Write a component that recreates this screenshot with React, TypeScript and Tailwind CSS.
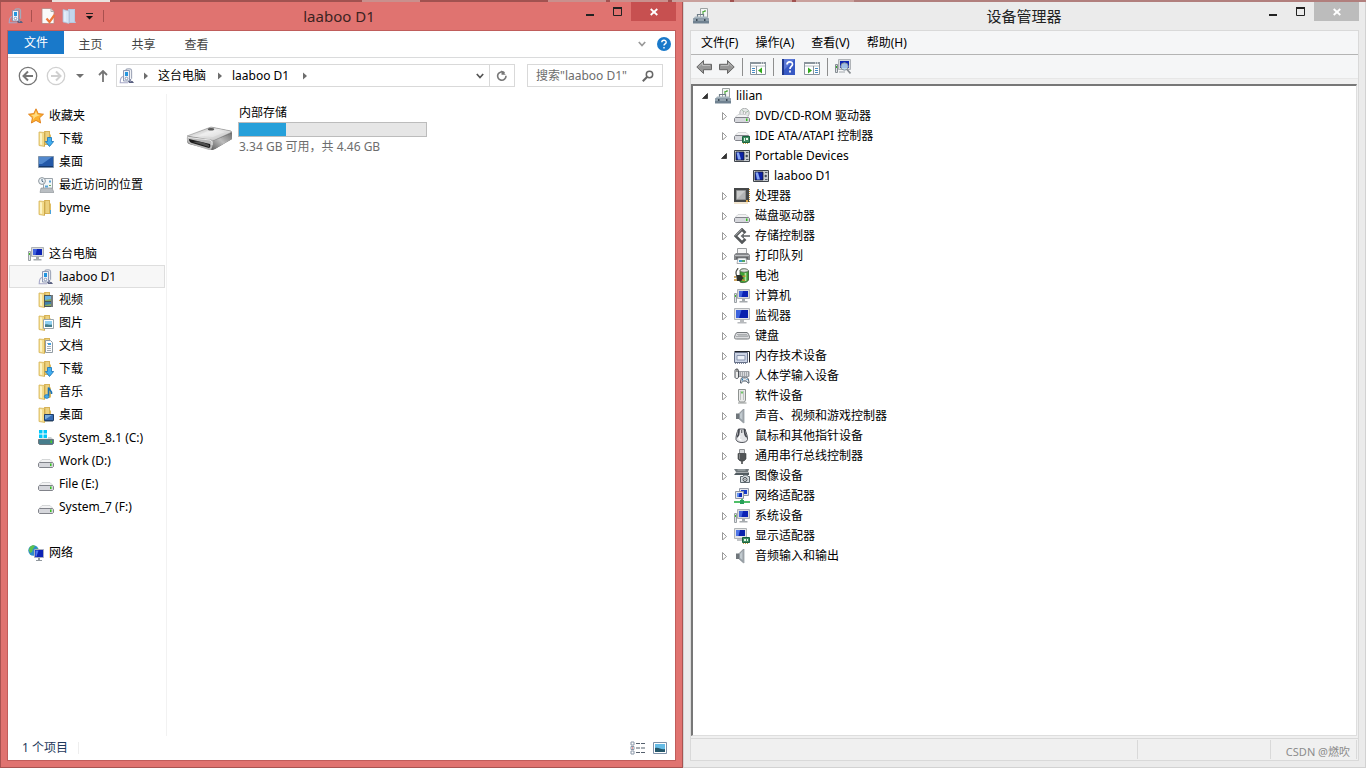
import React from "react";

type IconProps = { children: React.ReactNode; className?: string; box?: string };

const Icon = ({ children, className = "size-4", box = "0 0 16 16" }: IconProps) => (
  <svg viewBox={box} className={`block shrink-0 ${className}`} fill="none" aria-hidden="true">
    {children}
  </svg>
);

const FolderShape = () => (
  <>
    <path d="M6 0h6v3l1 1v9l-1 1H6z" fill="#dfbd62" />
    <path d="M7 .5h4.500v13H7z" fill="#ecd17f" stroke="#cfa94e" strokeWidth=".7" />
    <path d="M1 1 7 1.500v14l-6-1z" fill="#f3dc8c" />
    <path d="M2 2 4 2.500v11.500l-2-.5z" fill="#fdf3c4" />
    <path d="M6.500 1.500V15" stroke="#cda849" />
    <path d="M1 1 7 1.500M1 14.500l6 1M1 1v13.500" stroke="#d6b459" strokeWidth=".8" />
  </>
);

const FolderIcon = () => (
  <Icon>
    <FolderShape />
    <path d="M12.500 10v4" stroke="#4ba3dc" />
  </Icon>
);

const DownloadsIcon = () => (
  <Icon>
    <FolderShape />
    <path d="M9.500 6.500h4v4h2.200L11.500 15.500 7.300 10.500h2.200z" fill="#42aef0" stroke="#1672b5" strokeWidth=".8" />
  </Icon>
);

const VideosIcon = () => (
  <Icon>
    <FolderShape />
    <path d="M6 3h9v12H6z" fill="#4c5559" />
    <path d="M7 4h6v5H7z" fill="#67b3e3" />
    <path d="M7 10h6v4H7z" fill="#3f81aa" />
    <path d="M7 8l6-1v2H7zM7 13l6-1v2H7z" fill="#87a95d" />
    <path d="M14 3.500v11" stroke="#eee" strokeDasharray="1 1" />
  </Icon>
);

const PicturesIcon = () => (
  <Icon>
    <FolderShape />
    <path d="M5.500 4.500h10v9h-10z" fill="#fff" stroke="#9aa5ab" />
    <path d="M7 6h7v6H7z" fill="#8fd0f1" />
    <path d="M7 9.500c2-1 4 1 7 0V12H7z" fill="#457e8b" />
  </Icon>
);

const DocumentsIcon = () => (
  <Icon>
    <FolderShape />
    <path d="M7.500 2.500h5l2 2v10h-7z" fill="#fcfdfe" stroke="#929ca3" />
    <path d="M9 8.500h4M9 10.500h4M9 12.500h4M9 5.500h1" stroke="#a5adb5" />
    <path d="M10 5h3v2h-3z" fill="#47a2df" />
  </Icon>
);

const MusicIcon = () => (
  <Icon>
    <FolderShape />
    <path d="M10.500 12V3.500c.5 2.500 3.500 2.500 3 6.500" stroke="#1a72b6" strokeWidth="1.600" />
    <ellipse cx="8.700" cy="12.500" rx="2.300" ry="1.900" fill="#43a9e5" stroke="#1a72b6" strokeWidth=".7" />
  </Icon>
);

const FolderDesktopIcon = () => (
  <Icon>
    <FolderShape />
    <path d="M6.500 7.500h9v6h-9z" fill="#356bb4" stroke="#213f68" />
    <path d="M7 8h7l-6 4H7z" fill="#78acdd" />
    <path d="M7 14.500h8" stroke="#9aa6af" />
  </Icon>
);

const DesktopIcon = () => (
  <Icon>
    <path d="M.5 2.500h15v11H.500z" fill="#2459a8" stroke="#7d93ab" />
    <path d="M1 3h13L4 10H1z" fill="#5288cd" />
    <path d="M1 12.500h14" stroke="#16376a" />
  </Icon>
);

const StarIcon = () => (
  <Icon>
    <path
      d="M8 .8 10.200 5.600l5.300.6-3.900 3.600 1 5.200L8 12.400 3.400 15l1-5.200L.5 6.200l5.300-.6z"
      fill="#fbb12f"
      stroke="#df7d17"
      strokeWidth=".9"
    />
    <path d="M8 3 9.300 6.500l3 .5-5 2-2.500 3 .7-3.200L3 7l3.500-.5z" fill="#ffdc83" />
  </Icon>
);

const RecentIcon = () => (
  <Icon>
    <path d="M5.500 1.500h9v10h-9z" fill="#f3f6f8" stroke="#9ba3a9" />
    <path d="M3 11h11l2 4.500H2z" fill="#b9bec2" stroke="#868d92" strokeWidth=".6" />
    <path d="M7 9.500h3M11 4.500h2" stroke="#58a1d4" strokeWidth="2" />
    <path d="M11 8.500h2" stroke="#66ad61" />
    <circle cx="4" cy="4" r="3.400" fill="#eef3f7" stroke="#8d969d" />
    <path d="M4 2v2.200l1.500.8" stroke="#4f6a80" />
  </Icon>
);

const PortableIcon = () => (
  <Icon>
    <path d="M7 2.500C7 1 8 .8 9 .8h2c1.500 0 1.500.8 1.500 2v8" stroke="#a3aabb" strokeWidth="1.300" />
    <path d="M4.500 2.500h6v10.500h-6z" fill="#eef1f8" stroke="#8590ad" strokeWidth=".9" />
    <path d="M6 4h3v4H6z" fill="#2496df" />
    <circle cx="7.500" cy="10.500" r="1.300" fill="#fff" stroke="#7485a5" strokeWidth=".8" />
    <path d="M4 8.500C2 9 1.200 10.500 1.200 14.800H9" stroke="#a6a8c8" strokeWidth="1.100" />
    <path d="M9 13h4.500l1.500 2h-5z" fill="#596080" />
    <path d="M11.500 11v3" stroke="#888da9" strokeWidth="1.300" />
  </Icon>
);

const ComputerIcon = () => (
  <Icon>
    <path d="M.5 5.500h2v9h-2z" fill="#e2e5e8" stroke="#9aa0a5" />
    <path d="M1.500 7v2" stroke="#42bb28" />
    <path d="M3.500 1.500h12v9h-12z" fill="#d9dbdd" stroke="#aeb2b5" />
    <path d="M5 3h9v6H5z" fill="#0c23b5" />
    <path d="M5 3h4L7.500 9H5z" fill="#3f62dd" />
    <path d="M8 11h3v2H8zM5.500 13h8v1.500h-8z" fill="#a5aaae" />
  </Icon>
);

const MonitorIcon = () => (
  <Icon>
    <path d="M.5.5h15v11H.500z" fill="#e5e6e8" stroke="#b3b6b9" />
    <path d="M2 2h12v8H2z" fill="#0b22ae" />
    <path d="M2 2h5.500L5 10H2z" fill="#3c63dd" />
    <path d="M6 12h4v2H6zM3.500 14h9v1.500h-9z" fill="#b7babd" />
  </Icon>
);

const NetworkPlaceIcon = () => (
  <Icon>
    <circle cx="5.500" cy="5.500" r="5.200" fill="#2c8ccb" />
    <path d="M2 2c2-2 4-2 5-1L5 4 4 7 2 8 .8 5zM6 5l4-2 .5 4L7 10z" fill="#5dc24b" />
    <path d="M6.500 4.500h9v8h-9z" fill="#0c23b5" stroke="#a9aec0" />
    <path d="M7.500 5.500h3l-2 6h-1z" fill="#4d77ef" />
    <path d="M10 13h2v2h-2zM8 15h6v1H8z" fill="#92999f" />
  </Icon>
);

const DriveShape = () => (
  <>
    <path d="M4 6.500h8l3 3H1z" fill="#f3f3f4" stroke="#c6c8ca" strokeWidth=".7" />
    <path d="M1.500 9.500h13l1 1v3l-1 1h-13l-1-1v-3z" fill="#d6d7dc" stroke="#81838a" />
    <path d="M12 10.500h1.500v2.500H12z" fill="#35c321" />
  </>
);

const DriveIcon = () => (
  <Icon>
    <DriveShape />
  </Icon>
);

const SystemDriveIcon = () => (
  <Icon>
    <path d="M1 0h3.500v3.500H1zM5.500 0H9v3.500H5.500zM1 4.500h3.500V8H1zM5.500 4.500H9V8H5.500z" fill="#00c8fa" />
    <path d="M10 7h3l2.500 2.500H.5L2 8.500h8z" fill="#c9cfd1" />
    <path d="M.5 9.500h15v4l-1 1h-13l-1-1z" fill="#477d8c" stroke="#6c777d" />
    <path d="M12.500 10.500H14V13h-1.500z" fill="#48d229" />
  </Icon>
);

const OpticalIcon = () => (
  <Icon>
    <circle cx="10.500" cy="5" r="4.700" fill="#e5e7e7" stroke="#9fa3a5" strokeWidth=".8" />
    <path d="M10.500 5 8 1.500M10.500 5l4-2M10.500 5v4" stroke="#a3bfa8" />
    <circle cx="10.500" cy="5" r="1.300" fill="#fff" stroke="#999" strokeWidth=".6" />
    <DriveShape />
  </Icon>
);

const IdeIcon = () => (
  <Icon>
    <g transform="translate(0 -2)">
      <DriveShape />
    </g>
    <path d="M8.500 8.500h7v6h-7z" fill="#3f8e62" stroke="#1b6340" />
    <path d="M10 10h1v3h-1zM12 10h2v2h-2z" fill="#e5f5e9" />
    <path d="M9 15.500h5" stroke="#c5a33f" strokeDasharray="1 1" />
  </Icon>
);

const PortableClassIcon = () => (
  <Icon>
    <path d="M.5 2.500h15v11H.500z" fill="#c9cdd2" stroke="#40454c" />
    <path d="M2 4h8v8H2z" fill="#0d22a8" stroke="#15191e" strokeWidth=".7" />
    <path d="M2.500 4.500H5l2 7H4z" fill="#86a5f2" />
    <circle cx="12.700" cy="8" r="1.200" fill="#444b55" />
    <path d="M12 4.500h2.500M12 11.500h2.500" stroke="#5b626b" />
  </Icon>
);

const ProcessorIcon = () => (
  <Icon>
    <path d="M0 0h15v14H0z" fill="#454748" />
    <path d="M2.500 2.500h9v9h-9z" fill="#b2b3b4" stroke="#8f9091" />
    <path d="M3 3h8l-8 8z" fill="#c9caca" />
    <path d="M.5 15h14M15.500 1v13" stroke="#c6943e" strokeDasharray="1 1" />
    <path d="M12 12h2v2h-2z" fill="#d7a246" />
  </Icon>
);

const StorageIcon = () => (
  <Icon>
    <path d="M11.500 5 8 1.500 1.500 8 8 14.500l3.500-3.500" stroke="#55585a" strokeWidth="2.600" />
    <path d="M8 1.200 1.500 7.700" stroke="#a3a6a8" />
    <path d="M8 8h8" stroke="#696c6e" strokeWidth="1.600" />
    <path d="M10 5v6L6.500 8z" fill="#696c6e" />
  </Icon>
);

const PrinterIcon = () => (
  <Icon>
    <path d="M3.500.5h9v6h-9z" fill="#f5f5f5" stroke="#9c9fa1" />
    <path d="M2 5h12l2 2v5H0V7z" fill="#85878a" />
    <path d="M1 7.500h14" stroke="#bfc1c3" />
    <path d="M2 10h12" stroke="#3e4042" />
    <path d="M4 10h8l1 5.500H3z" fill="#f5f8f9" stroke="#8b8d8f" strokeWidth=".7" />
    <path d="M5 13h3" stroke="#3a9bc4" strokeWidth="2" />
    <path d="M8 13h3" stroke="#54a562" strokeWidth="2" />
  </Icon>
);

const BatteryIcon = () => (
  <Icon>
    <path d="M6 2.500C6 .500 13 0 14.500 3v9c-1.500 3-6.500 3-8.500 2z" fill="#3fa336" stroke="#36532f" strokeWidth=".8" />
    <ellipse cx="10.200" cy="2.500" rx="4" ry="1.700" fill="#dce1da" stroke="#5b625a" strokeWidth=".7" />
    <path d="M11.500 5v8" stroke="#b4e6a2" strokeWidth="1.800" />
    <path d="M4 0C3 3 .8 3 2.500 7" stroke="#575a55" strokeWidth="1.300" />
    <path d="M2 7h4c2 0 3 1 3 2.500S8 13 6 13H3z" fill="#2d312c" />
    <path d="m8.500 8.500 3-.5M8 12l3 .5M0 9h2M0 12h3" stroke="#c18c30" strokeWidth="1.300" />
  </Icon>
);

const KeyboardIcon = () => (
  <Icon>
    <path d="M3 4.500h10c1 0 2.500 3.500 2.500 5s-1 1.500-2 1.500h-11c-1 0-2 0-2-1.500S2 4.500 3 4.500z" fill="#dcdddf" stroke="#74787b" />
    <path d="M3.500 6.500h9M2.500 8.500h11" stroke="#7b7f82" strokeDasharray="1 1" />
    <path d="M4.500 7.500h9" stroke="#9a9ea1" strokeDasharray="1 1" />
  </Icon>
);

const MemoryIcon = () => (
  <Icon>
    <path d="M.5 3.500h15v11" stroke="#1f2228" />
    <path d="M.5 4.500h13v10H.500z" fill="#cbd3e4" stroke="#667087" />
    <path d="M3 7.500h8v4.500H3z" fill="#eef2f9" stroke="#8995ae" />
    <path d="M1 15.500h12" stroke="#818ba0" strokeDasharray="1 1" />
  </Icon>
);

const HidIcon = () => (
  <Icon>
    <path d="M5 3.500h10v5H5z" fill="#d9dbde" stroke="#9ca0a5" />
    <path d="M6 5h9M6 7h9" stroke="#6f757b" strokeDasharray="1 1" />
    <path d="M1 2.500C1 .5 4.500.5 4.500 2.500V9c0 2-3.500 2-3.500 0z" fill="#eee" stroke="#4c5056" />
    <path d="M3 1v3" stroke="#444" />
    <path d="M6.500 15c.5-6 1.500-6 3-5.200h2c2-.8 3 0 3.500 5.200-1.500.8-2-2-3-2H9.500c-1 0-1.500 2.800-3 2z" fill="#e0e6ec" stroke="#495562" />
    <path d="M8.500 10.500v2M12.500 11.500h1" stroke="#247eba" />
  </Icon>
);

const SoftwareIcon = () => (
  <Icon>
    <path d="M4.500 1.500h7V12l-1 2h-5l-1-2z" fill="#e9eae9" stroke="#8e9290" />
    <path d="M8 3.500v2" stroke="#45b93a" strokeWidth="1.500" />
    <path d="M6.500 3v9M9.500 3v9" stroke="#bec2c0" />
    <path d="M4 15h8.500" stroke="#8f9391" />
  </Icon>
);

const SpeakerIcon = () => (
  <Icon>
    <path d="M2 5.500h3V11H2z" fill="#6f767b" />
    <path d="M5 5.500 9.500 1v14L5 11z" fill="#98a1a7" stroke="#70777d" strokeWidth=".5" />
    <path d="M6 6 8.500 3v9L6 10z" fill="#c2cacf" />
    <path d="M10.500 1v14" stroke="#d3d9dc" />
  </Icon>
);

const MouseIcon = () => (
  <Icon>
    <path d="M4.500 1h6.300C12 4 13.700 8 13.500 11.500c-.5 4-10.500 4-11.500 0C1.800 8 3 4 4.500 1z" fill="#e3e4e7" stroke="#50535a" />
    <path d="M5 1c0 5-.5 7-2 8M10.500 1c0 5 .5 7 2.300 8" stroke="#44474e" strokeWidth="1.700" />
    <path d="M7.700 2v3" stroke="#6c6f74" strokeWidth="1.300" />
    <path d="M6 8c-2 2-1 4 1.500 4" stroke="#fff" strokeWidth="1.500" />
  </Icon>
);

const UsbIcon = () => (
  <Icon>
    <path d="M5.500 1.500h5v4h-5z" fill="#d5d7d9" stroke="#8c8f92" />
    <path d="M4 5.500h8V11l-2 2H6l-2-2z" fill="#515456" stroke="#3d4042" strokeWidth=".6" />
    <path d="M5.500 6v5" stroke="#85888a" />
    <path d="M8 13v3" stroke="#3c3f41" strokeWidth="1.500" />
  </Icon>
);

const ImagingIcon = () => (
  <Icon>
    <path d="M0 1h15l-1 3H2z" fill="#71797d" />
    <path d="M3.500 2h8" stroke="#b0b7b9" />
    <path d="M2 4.500h13V7H0z" fill="#515b60" />
    <path d="M6.500 8.500H9l1-1.500h3l1 1.500h1.500v6h-9z" fill="#d4dbdf" stroke="#5d686f" />
    <circle cx="11" cy="11.500" r="2" fill="#f2f5f6" stroke="#43494e" />
    <path d="M10.500 11.500h1" stroke="#36424a" strokeWidth="1.500" />
  </Icon>
);

const AdapterIcon = () => (
  <Icon>
    <path d="M5.500.5h9v7h-9z" fill="#e3e6ec" stroke="#9298a3" />
    <path d="M7 2h6v4H7z" fill="#143bc8" />
    <path d="M1.500 3.500h8v7h-8z" fill="#e3e6ec" stroke="#8f96a2" />
    <path d="M3 5h5v4H3z" fill="#0d2bb8" />
    <path d="M3 5h2.500L4.500 9H3z" fill="#6091f0" />
    <path d="M0 14h16M8 11v3" stroke="#4fbf68" strokeWidth="2" />
    <path d="M6 12h4v4H6z" fill="#27a05a" />
  </Icon>
);

const DisplayAdapterIcon = () => (
  <Icon>
    <path d="M.5.5h12v10H.500z" fill="#e4e5e7" stroke="#b0b4b7" />
    <path d="M2 2h9v6H2z" fill="#0b22ae" />
    <path d="M2 2h4L4.500 8H2z" fill="#4f75e5" />
    <path d="M3 11h5v2H3z" fill="#c0c3c5" />
    <path d="M8.500 9.500h7v5h-7z" fill="#408e61" stroke="#1b6340" />
    <path d="M10 11h2v2h-2zM13 11h1v2h-1z" fill="#e6f5e9" />
    <path d="M9 15.500h5" stroke="#c5a33f" strokeDasharray="1 1" />
  </Icon>
);

const ToolboxIcon = () => (
  <Icon>
    <path d="M7.500.5h7v9h-7z" fill="#f4f6f5" stroke="#9ca2a2" />
    <path d="M10 6V3.500h2V2" stroke="#53aa45" strokeWidth="1.200" />
    <path d="M4.500 9V6.500h6V9" stroke="#6f7d87" strokeWidth="1.200" />
    <path d="M2 8.500h12l2 2.500H0z" fill="#a8b6bf" />
    <path d="M0 10.500h16v5H0z" fill="#708291" />
    <path d="M0 12h16" stroke="#b4c1ca" />
    <path d="M3 11h1.500v2H3zM11 11h1.500v2H11z" fill="#3c4a56" />
  </Icon>
);

const BigDriveIcon = () => (
  <Icon className="w-12 h-7" box="0 0 48 28">
    <defs>
      <linearGradient id="driveTop" x1="0" y1="0" x2="1" y2="1">
        <stop offset="0" stopColor="#a5a5a5" />
        <stop offset=".45" stopColor="#e9e9e9" />
        <stop offset="1" stopColor="#bcbcbc" />
      </linearGradient>
      <linearGradient id="driveSide" x1="0" y1="1" x2="1" y2="0">
        <stop offset="0" stopColor="#636363" />
        <stop offset=".5" stopColor="#bdbdbd" />
        <stop offset="1" stopColor="#707070" />
      </linearGradient>
    </defs>
    <path d="M25 1 45 5q1 1 1 3v5L29 23l-3 1L3 18q-2-1-2-4v-3z" fill="#666" />
    <path d="M25 1 45 5q1 1-1 2L29 14q-2 1-4 0L1 10z" fill="url(#driveTop)" stroke="#929292" strokeWidth=".6" />
    <path d="m27 15 19-8v6L29 23l-3 1z" fill="url(#driveSide)" />
    <path d="M1 10.500q-1 5 3 7.500l19 6q4 0 4-9.500z" fill="#b9b9b9" />
    <path d="M2 11.500 24 14q3 1 2 5" stroke="#e6e6e6" />
    <path d="M3 13q0 3 3 4l17 5q2-1 1-4z" fill="#1d1d1d" />
    <path d="M7 16q8-2 16 3v2z" fill="#505050" />
    <path d="M13 9.500 25 3l14 3-12 5z" fill="#fff" opacity=".28" />
    <ellipse cx="25" cy="3.300" rx="3.200" ry="1.200" fill="#595959" />
  </Icon>
);

const ConsoleIcon = ({ flip = false }: { flip?: boolean }) => (
  <Icon>
    <path d="M.5 3.500h15v12H.500z" fill="#fff" stroke="#8a949c" />
    <path d="M0 3h16v2H0z" fill="#8a949c" />
    <path d="M11 4h4" stroke="#fff" strokeDasharray="1 1" />
    <path d="M1 7h14" stroke="#b5bcc2" />
    {flip ? (
      <>
        <path d="M9.500 7v8" stroke="#8a949c" />
        <path d="M11 9.500h3M11 11.500h3M11 13.500h3" stroke="#478bc4" />
        <path d="m4 8.500 4 3L4 14.500z" fill="#32a91f" />
      </>
    ) : (
      <>
        <path d="M6.500 7v8" stroke="#8a949c" />
        <path d="M2 9.500h3M2 11.500h3M2 13.500h3" stroke="#478bc4" />
        <path d="m12 8.500-4 3 4 3z" fill="#32a91f" />
      </>
    )}
  </Icon>
);

const HelpBookIcon = () => (
  <Icon>
    <path d="M1 0h13v16H1z" fill="#3759c4" />
    <path d="M1 0h2v16H1z" fill="#20388b" />
    <path d="M3 0h11L3 11z" fill="#5a77d6" />
    <path d="M6 5.500C6 2 11.500 2 11.500 5.200 11.500 7.500 9 7.500 9 10M9 11.500v2" stroke="#fff" strokeWidth="1.700" />
  </Icon>
);

const ScanIcon = () => (
  <Icon>
    <path d="M.5 5.500h2v8h-2z" fill="#dce0e3" stroke="#858c92" />
    <path d="M1.500 7v2" stroke="#35ad29" />
    <path d="M3.500.5h12v10h-12z" fill="#d9dcdf" stroke="#b0b4b8" />
    <path d="M5 2h9v7H5z" fill="#0f28b2" />
    <circle cx="9.500" cy="7.500" r="3.700" fill="#b9d9ef" fillOpacity=".85" stroke="#8b949b" />
    <path d="m12 10.500 3.500 4" stroke="#84898e" strokeWidth="1.700" />
    <path d="M4 13h6" stroke="#a2a8ad" />
  </Icon>
);

const ToolArrow = ({ back = false }: { back?: boolean }) => (
  <Icon>
    <path
      d={back ? "M.8 8 7.500 1.500v3.800h8v5.400h-8v3.800z" : "M15.200 8 8.500 1.500v3.800h-8v5.400h8v3.800z"}
      fill="#979797"
      stroke="#666"
      strokeLinejoin="round"
    />
    <path d={back ? "M3 7.500 6.500 4v2.500H14" : "M13 7.500 9.500 4v2.500H2"} stroke="#bcbcbc" />
  </Icon>
);

const PropertiesIcon = () => (
  <Icon>
    <path d="M2 .5h9l3 3v12H2z" fill="#fafafa" stroke="#b58681" strokeWidth=".8" />
    <path d="M11 .5v3h3" stroke="#aaa" />
    <path d="m6.500 10.500 3 3.500L14.500 7" stroke="#ed773b" strokeWidth="2.200" />
  </Icon>
);

const NewFolderIcon = () => (
  <Icon>
    <path d="M6 1h7v12l1 2H6z" fill="#b5cae2" />
    <path d="M1 1.500 7 3v12.500L1 14z" fill="#d7e5f5" stroke="#a9bdd7" strokeWidth=".7" />
    <path d="M8 2h4v12H8z" fill="#c3d6ec" />
    <path d="M3 4v9" stroke="#eef5fd" />
  </Icon>
);

const Chevron = ({ color }: { color: string }) => (
  <Icon className="size-2" box="0 0 8 8">
    <path d="m.8 2 3.200 3.500L7.200 2" stroke={color} strokeWidth="1.700" />
  </Icon>
);

const CrumbArrow = () => (
  <Icon className="h-2 w-1" box="0 0 4 8">
    <path d="M0 0.500 4 4 0 7.500z" fill="#6d6d6d" />
  </Icon>
);

type NavItem = { label: string; icon: React.ReactNode; active?: boolean };
type NavGroup = { title: string; icon: React.ReactNode; items: NavItem[] };

const navGroups: NavGroup[] = [
  {
    title: "收藏夹",
    icon: <StarIcon />,
    items: [
      { label: "下载", icon: <DownloadsIcon /> },
      { label: "桌面", icon: <DesktopIcon /> },
      { label: "最近访问的位置", icon: <RecentIcon /> },
      { label: "byme", icon: <FolderIcon /> },
    ],
  },
  {
    title: "这台电脑",
    icon: <ComputerIcon />,
    items: [
      { label: "laaboo D1", icon: <PortableIcon />, active: true },
      { label: "视频", icon: <VideosIcon /> },
      { label: "图片", icon: <PicturesIcon /> },
      { label: "文档", icon: <DocumentsIcon /> },
      { label: "下载", icon: <DownloadsIcon /> },
      { label: "音乐", icon: <MusicIcon /> },
      { label: "桌面", icon: <FolderDesktopIcon /> },
      { label: "System_8.1 (C:)", icon: <SystemDriveIcon /> },
      { label: "Work (D:)", icon: <DriveIcon /> },
      { label: "File (E:)", icon: <DriveIcon /> },
      { label: "System_7 (F:)", icon: <DriveIcon /> },
    ],
  },
  { title: "网络", icon: <NetworkPlaceIcon />, items: [] },
];

type Device = { label: string; icon: React.ReactNode; children?: Device[]; leaf?: boolean };

const devices: Device[] = [
  { label: "DVD/CD-ROM 驱动器", icon: <OpticalIcon /> },
  { label: "IDE ATA/ATAPI 控制器", icon: <IdeIcon /> },
  {
    label: "Portable Devices",
    icon: <PortableClassIcon />,
    children: [{ label: "laaboo D1", icon: <PortableClassIcon />, leaf: true }],
  },
  { label: "处理器", icon: <ProcessorIcon /> },
  { label: "磁盘驱动器", icon: <DriveIcon /> },
  { label: "存储控制器", icon: <StorageIcon /> },
  { label: "打印队列", icon: <PrinterIcon /> },
  { label: "电池", icon: <BatteryIcon /> },
  { label: "计算机", icon: <ComputerIcon /> },
  { label: "监视器", icon: <MonitorIcon /> },
  { label: "键盘", icon: <KeyboardIcon /> },
  { label: "内存技术设备", icon: <MemoryIcon /> },
  { label: "人体学输入设备", icon: <HidIcon /> },
  { label: "软件设备", icon: <SoftwareIcon /> },
  { label: "声音、视频和游戏控制器", icon: <SpeakerIcon /> },
  { label: "鼠标和其他指针设备", icon: <MouseIcon /> },
  { label: "通用串行总线控制器", icon: <UsbIcon /> },
  { label: "图像设备", icon: <ImagingIcon /> },
  { label: "网络适配器", icon: <AdapterIcon /> },
  { label: "系统设备", icon: <ComputerIcon /> },
  { label: "显示适配器", icon: <DisplayAdapterIcon /> },
  { label: "音频输入和输出", icon: <SpeakerIcon /> },
];

const WindowControls = ({ closeClass }: { closeClass: string }) => (
  <div className="flex h-[19px] shrink-0">
    <button type="button" aria-label="最小化" className="flex w-7 items-center justify-center">
      <Icon className="size-3" box="0 0 12 12">
        <path d="M3 9h8" stroke="#222" strokeWidth="2" />
      </Icon>
    </button>
    <button type="button" aria-label="最大化" className="flex w-7 items-center justify-center">
      <Icon className="size-3" box="0 0 12 12">
        <path d="M2.500 2v7.500h8V2" stroke="#222" />
        <path d="M2 2h9" stroke="#222" strokeWidth="2" />
      </Icon>
    </button>
    <button type="button" aria-label="关闭" className={`flex w-[45px] items-center justify-center ${closeClass}`}>
      <Icon className="size-2" box="0 0 8 8">
        <path d="m.7 1 6.600 6M7.300 1 .7 7" stroke="#fff" strokeWidth="1.800" />
      </Icon>
    </button>
  </div>
);

const ExplorerTitleBar = () => (
  <header className="flex h-7 items-start pr-1.5">
    <div className="flex h-7 w-[102px] items-center pl-[7px]">
      <PortableIcon />
      <span className="ml-[7px] h-3 w-px bg-[#a9504e]" />
      <button type="button" aria-label="属性" className="ml-2">
        <PropertiesIcon />
      </button>
      <button type="button" aria-label="新建文件夹" className="ml-1.5">
        <NewFolderIcon />
      </button>
      <button type="button" aria-label="自定义快速访问工具栏" className="ml-2">
        <Icon className="size-2" box="0 0 8 8">
          <path d="M0 1.500h7" stroke="#222" />
          <path d="M0 4h7L3.500 7.500z" fill="#111" />
        </Icon>
      </button>
      <span className="ml-[9px] h-3 w-px bg-[#a9504e]" />
    </div>
    <h1 className="flex-1 self-center text-center text-[15px] leading-5 text-[#3c2322]">laaboo D1</h1>
    <WindowControls closeClass="bg-[#c75050]" />
  </header>
);

const ExplorerRibbon = () => (
  <nav className="flex h-[27px] items-start border-b border-[#dadbdc] text-[#444]">
    <button type="button" className="h-[23px] w-14 bg-[#1979ca] text-white">
      文件
    </button>
    <button type="button" className="h-[27px] w-[53px]">
      主页
    </button>
    <button type="button" className="h-[27px] w-[53px]">
      共享
    </button>
    <button type="button" className="h-[27px] w-[53px]">
      查看
    </button>
    <div className="ml-auto flex h-[26px] items-center gap-[11px] pr-1">
      <button type="button" aria-label="展开功能区">
        <Chevron color="#999" />
      </button>
      <button type="button" aria-label="帮助">
        <Icon className="size-3.5" box="0 0 14 14">
          <circle cx="7" cy="7" r="7" fill="#1979ca" />
          <path d="M4.800 5.300C4.800 2.500 9.200 2.500 9.200 5.200 9.200 6.800 7 7 7 8.500M7 10v1.500" stroke="#fff" strokeWidth="1.400" />
        </Icon>
      </button>
    </div>
  </nav>
);

const AddressRow = () => (
  <div className="flex h-9 items-center pr-3 pb-px pl-2.5">
    <button type="button" aria-label="后退">
      <Icon className="size-5" box="0 0 20 20">
        <circle cx="10" cy="10" r="8.700" stroke="#757575" strokeWidth="1.300" />
        <path d="M15 10H6M10 5.500 5.500 10l4.500 4.500" stroke="#757575" strokeWidth="2" />
      </Icon>
    </button>
    <button type="button" aria-label="前进" className="ml-2">
      <Icon className="size-5" box="0 0 20 20">
        <circle cx="10" cy="10" r="8.700" stroke="#d0d0d0" strokeWidth="1.300" />
        <path d="M5 10h9M10 5.500l4.500 4.500-4.500 4.500" stroke="#d0d0d0" strokeWidth="2" />
      </Icon>
    </button>
    <button type="button" aria-label="最近的位置" className="ml-2.5">
      <Icon className="size-2" box="0 0 8 8">
        <path d="M0 2h8L4 6z" fill="#707070" />
      </Icon>
    </button>
    <button type="button" aria-label="上移" className="ml-3">
      <Icon className="h-3 w-3" box="0 0 12 12">
        <path d="M7 12V1M3 5l4-4 4 4" stroke="#757575" strokeWidth="1.800" />
      </Icon>
    </button>
    <div className="ml-2 flex h-[23px] flex-1 items-center border border-[#d9d9d9] pl-0.5">
      <PortableIcon />
      <div className="ml-[9px] flex items-center gap-2.5">
        <CrumbArrow />
        <button type="button" className="pr-0.5">
          这台电脑
        </button>
        <CrumbArrow />
        <button type="button" className="pr-1">
          laaboo D1
        </button>
        <CrumbArrow />
      </div>
      <button type="button" aria-label="展开地址" className="mr-[5px] ml-auto">
        <Chevron color="#555" />
      </button>
      <button type="button" aria-label="刷新" className="flex h-[21px] w-[25px] items-center justify-center border-l border-[#d9d9d9]">
        <Icon className="size-3" box="0 0 12 12">
          <path d="M8.500 2.800A4.200 4.200 0 1 0 10 5.800" stroke="#777" strokeWidth="1.600" />
          <path d="M5.500.2v4.500h4.300z" fill="#777" />
        </Icon>
      </button>
    </div>
    <div className="ml-3 flex h-[23px] w-[136px] items-center border border-[#d9d9d9] px-2">
      <input
        type="text"
        aria-label="搜索"
        placeholder={'搜索"laaboo D1"'}
        className="w-full min-w-0 bg-transparent outline-none placeholder:text-[#6d6d6d]"
      />
      <Icon className="size-3" box="0 0 12 12">
        <circle cx="7.500" cy="4.500" r="3.200" stroke="#666" strokeWidth="1.500" />
        <path d="M5 7 .8 11.200" stroke="#666" strokeWidth="2" />
      </Icon>
    </div>
  </div>
);

const NavPane = () => (
  <aside className="flex w-[159px] shrink-0 flex-col gap-[23px] border-r border-[#f2f2f2] pt-2.5 pr-px pl-px">
    {navGroups.map((group) => (
      <section key={group.title}>
        <h2 className="flex h-[23px] items-center gap-[5px] pl-[19px]">
          {group.icon}
          {group.title}
        </h2>
        <ul>
          {group.items.map((item) => (
            <li key={item.label}>
              <a
                href="#"
                className={`flex h-[23px] items-center gap-[5px] border pl-7 ${
                  item.active ? "border-[#dedede] bg-[#f7f7f7]" : "border-transparent"
                }`}
              >
                {item.icon}
                {item.label}
              </a>
            </li>
          ))}
        </ul>
      </section>
    ))}
  </aside>
);

const StorageTile = () => {
  const total = 4.46;
  const free = 3.34;

  return (
    <article className="flex items-end gap-1">
      <span className="pb-0.5">
        <BigDriveIcon />
      </span>
      <div className="w-[189px]">
        <h3 className="pl-px leading-[18px]">内部存储</h3>
        <div className="h-[15px] border border-[#bcbcbc] bg-[#e6e6e6]">
          <div className="h-full bg-[#26a0da]" style={{ width: `${((total - free) / total) * 100}%` }} />
        </div>
        <p className="pl-px leading-[19px] text-[#6d6d6d]">3.34 GB 可用，共 4.46 GB</p>
      </div>
    </article>
  );
};

const ExplorerWindow = () => (
  <section className="flex w-1/2 flex-col border border-t-0 border-[#a95351] bg-[#e07370]">
    <ExplorerTitleBar />
    <div className="mx-1.5 mb-1.5 flex flex-1 flex-col border border-[#c05d5b] bg-white">
      <ExplorerRibbon />
      <AddressRow />
      <div className="flex flex-1">
        <NavPane />
        <main className="flex-1 pt-2.5 pl-[19px]">
          <StorageTile />
        </main>
      </div>
      <footer className="flex h-6 items-center pr-[7px] pl-3.5 text-[#1e395b]">
        <span>1 个项目</span>
        <span className="ml-2.5 h-3 w-px bg-[#eee]" />
        <button type="button" aria-label="详细信息" className="ml-auto">
          <Icon>
            <path d="M1 2h3v3H1zM1 6.500h3v3H1zM1 11h3v3H1z" fill="#fff" stroke="#8a97a8" />
            <path d="M6 3.500h4M11 3.500h4M6 8h4M11 8h4M6 12.500h4M11 12.500h4" stroke="#55606d" />
            <path d="M2 8h1" stroke="#d33" />
          </Icon>
        </button>
        <button type="button" aria-label="大缩略图" className="ml-1.5">
          <Icon>
            <path d="M1.500 2.500h13v11h-13z" fill="#fff" stroke="#7d91a9" />
            <path d="M3 4h10v8H3z" fill="#66bce6" />
            <path d="M3 8c4-1 6 2 10 1v3H3z" fill="#24576a" />
          </Icon>
        </button>
      </footer>
    </div>
  </section>
);

const Expander = ({ open }: { open: boolean }) => (
  <button type="button" aria-label={open ? "折叠" : "展开"} className="flex w-4 shrink-0 justify-center">
    <Icon className="size-2" box="0 0 8 8">
      {open ? (
        <path d="M6.500 1.500v5h-5z" fill="#333" stroke="#222" strokeWidth=".7" />
      ) : (
        <path d="M2.500.5 6.500 4.500l-4 3.500z" fill="#fff" stroke="#999" />
      )}
    </Icon>
  </button>
);

const DeviceRow = ({ device, open = false }: { device: Device; open?: boolean }) => (
  <div className="flex h-5 items-center">
    {device.leaf ? <span className="w-4" /> : <Expander open={open} />}
    <span className="mr-[5px] ml-0.5">{device.icon}</span>
    {device.label}
  </div>
);

const DeviceTree = () => (
  <ul className="pl-1">
    <li>
      <DeviceRow device={{ label: "lilian", icon: <ToolboxIcon /> }} open />
      <ul className="pl-[19px]">
        {devices.map((device) => (
          <li key={device.label}>
            <DeviceRow device={device} open={Boolean(device.children)} />
            {device.children && (
              <ul className="pl-[19px]">
                {device.children.map((child) => (
                  <li key={child.label}>
                    <DeviceRow device={child} />
                  </li>
                ))}
              </ul>
            )}
          </li>
        ))}
      </ul>
    </li>
  </ul>
);

const ToolbarDivider = () => <span className="h-[18px] w-px bg-[#8e8e8e]" />;

const DeviceManagerWindow = () => (
  <section className="flex w-1/2 flex-col border-r border-b border-l border-[#d2d2d2] bg-[#ebebeb]">
    <header className="flex h-7 items-start pr-1.5">
      <div className="flex h-7 w-[106px] items-center pl-[9px]">
        <ToolboxIcon />
      </div>
      <h1 className="flex-1 self-center text-center text-[15px] leading-5 text-[#222]">设备管理器</h1>
      <WindowControls closeClass="bg-[#bcbcbc]" />
    </header>
    <div className="mx-1.5 mb-1.5 flex flex-1 flex-col border border-[#d9d9d9] bg-[#f0f0f0]">
      <nav className="flex h-6 items-center gap-[17px] border-b border-[#b4b4b4] bg-[#f5f6f7] pl-2.5">
        <button type="button">文件(F)</button>
        <button type="button">操作(A)</button>
        <button type="button">查看(V)</button>
        <button type="button">帮助(H)</button>
      </nav>
      <div className="flex h-6 items-center gap-[7px] border-b border-[#e7e7e7] bg-[#f5f6f7] pl-[5px]">
        <button type="button" aria-label="后退">
          <ToolArrow back />
        </button>
        <button type="button" aria-label="前进">
          <ToolArrow />
        </button>
        <ToolbarDivider />
        <button type="button" aria-label="显示/隐藏控制台树">
          <ConsoleIcon />
        </button>
        <ToolbarDivider />
        <button type="button" aria-label="帮助">
          <HelpBookIcon />
        </button>
        <button type="button" aria-label="显示/隐藏操作窗格">
          <ConsoleIcon flip />
        </button>
        <ToolbarDivider />
        <button type="button" aria-label="扫描检测硬件改动">
          <ScanIcon />
        </button>
      </div>
      <main className="mt-[5px] mr-px flex-1 border-t-2 border-r border-b border-l-2 border-t-[#777] border-r-[#dedede] border-b-[#dedede] border-l-[#777] bg-white">
        <DeviceTree />
      </main>
      <footer className="mt-0.5 flex h-[22px] border-t border-[#d9d9d9] pr-px">
        <span className="flex-1" />
        <span className="my-px w-[133px] border-l border-[#d9d9d9]" />
        <span className="my-px w-[87px] border-r border-l border-[#d9d9d9] pt-1 pr-1.5 text-right text-[11px] leading-4 whitespace-nowrap text-[#8c8c8c]">
          CSDN @燃吹
        </span>
      </footer>
    </div>
  </section>
);

const App = () => (
  <div className="flex min-h-screen flex-col bg-white font-['Noto_Sans','Noto_Sans_CJK_SC',sans-serif] text-[12px] leading-4 text-black">
    <div className="flex h-0.5 bg-[#a15250]">
      <span className="ml-[52px] w-[58px] bg-[#e9e2de]" />
      <span className="ml-[252px] w-[58px] bg-[#c9908d]" />
      <span className="ml-[128px] w-[58px] bg-[#c9908d]" />
      <span className="ml-1 w-[58px] bg-[#c9908d]" />
      <span className="ml-1 w-[58px] bg-[#c9a09c]" />
      <span className="ml-1 w-[58px] bg-[#c9a09c]" />
      <span className="ml-1 w-[58px] bg-[#c9a09c]" />
      <span className="flex-1 bg-[#b17f7d]" />
    </div>
    <div className="flex flex-1">
      <ExplorerWindow />
      <DeviceManagerWindow />
    </div>
  </div>
);

export default App;
